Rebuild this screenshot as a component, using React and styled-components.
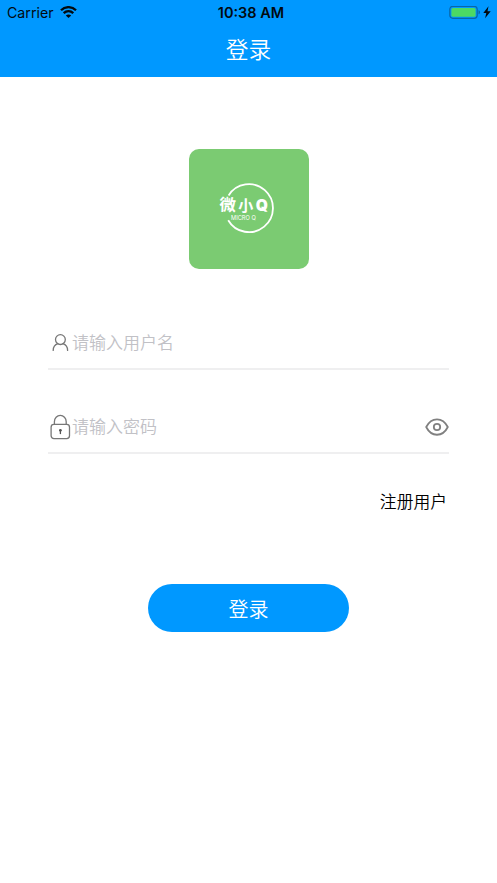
import React from "react";
import styled, { createGlobalStyle } from "styled-components";

const GlobalStyle = createGlobalStyle`
  * { box-sizing: border-box; }
  body { margin: 0; background: #fff; }
`;

const Screen = styled.main`
  width: 497px;
  height: 883px;
  display: flex;
  flex-direction: column;
  overflow: hidden;
  background: #fff;
  font-family: Inter, "Noto Sans CJK SC", sans-serif;
`;

const Header = styled.header`
  height: 77px;
  background: #0098ff;
`;

const StatusBar = styled.div`
  display: grid;
  grid-template-columns: 1fr auto 1fr;
  align-items: center;
  height: 25px;
  padding: 0 6px 0 7px;
  color: #020a10;
`;

const StatusGroup = styled.div`
  display: flex;
  align-items: center;
  justify-content: ${(p) => (p.$end ? "flex-end" : "flex-start")};
  gap: ${(p) => (p.$end ? "2px" : "6px")};
`;

const Carrier = styled.span`
  font-size: 14.2px;
  line-height: 25px;
`;

const Clock = styled.span`
  font-size: 14.5px;
  font-weight: 600;
  line-height: 25px;
  padding-left: 4px;
`;

const Title = styled.h1`
  margin: 0;
  padding-top: 8px;
  font-size: 22.7px;
  font-weight: 350;
  line-height: 34px;
  text-align: center;
  color: #fff;
`;

const Content = styled.form`
  display: flex;
  flex-direction: column;
  padding: 72px 48px 0;
`;

const LogoTile = styled.div`
  align-self: center;
  width: 120px;
  height: 120px;
  border-radius: 10px;
  overflow: hidden;
  background: #7bcb72;
  margin-bottom: 46px;
`;

const Field = styled.label`
  display: flex;
  align-items: center;
  height: ${(p) => (p.$tall ? "84px" : "55px")};
  padding-top: ${(p) => (p.$tall ? "32px" : "2px")};
  border-bottom: 2px solid #efeff0;
`;

const Input = styled.input`
  flex: 1;
  min-width: 0;
  height: 30px;
  padding: 0 0 ${(p) => (p.type === "password" ? "3px" : "2px")};
  border: 0;
  outline: 0;
  background: none;
  font: 350 17px "Noto Sans CJK SC", sans-serif;
  color: #111;
  &::placeholder { color: #c1c1c6; opacity: 1; }
`;

const Icon = styled.svg`
  display: block;
  flex: none;
`;

const RevealButton = styled.button`
  padding: 0;
  border: 0;
  background: none;
`;

const RegisterLink = styled.a`
  align-self: flex-end;
  margin-top: 35px;
  padding-right: 2px;
  font-size: 16.8px;
  font-weight: 350;
  line-height: 26px;
  color: #000;
`;

const LoginButton = styled.button`
  align-self: center;
  width: 201px;
  height: 48px;
  margin-top: 69px;
  padding: 0;
  border: 0;
  border-radius: 24px;
  background: #0098ff;
  color: #fff;
  font: 350 20px "Noto Sans CJK SC", sans-serif;
`;

const WifiIcon = () => (
  <Icon width="17" height="13" viewBox="0 0 17 13">
    <g fill="none" stroke="#020a10" strokeWidth="2.3">
      <path d="M1 4.2C5.2.1 11.8.1 16 4.2" />
      <path d="M3.7 7.2C6.5 4.6 10.5 4.6 13.3 7.2" />
    </g>
    <path d="M5.8 9.4c1.6-1.3 3.8-1.3 5.4 0L8.5 12.1z" fill="#020a10" />
  </Icon>
);

const BatteryIcon = () => (
  <Icon width="32" height="14" viewBox="0 0 32 14">
    <rect x=".8" y=".3" width="27.4" height="12" rx="3" fill="none" stroke="#0966a8" strokeWidth="1.2" />
    <rect x="2.4" y="1.9" width="24.2" height="8.8" rx="1.5" fill="#4cd964" />
    <path d="M29.5 4.3c2 .6 2 3.4 0 4z" fill="#0966a8" />
  </Icon>
);

const BoltIcon = () => (
  <Icon width="8" height="13" viewBox="0 0 8 13">
    <path d="M5.5.2.3 6.9h3L2.1 12.2 7.7 5.2H4.5z" fill="#020a10" />
  </Icon>
);

const Logo = () => (
  <Icon width="120" height="120" viewBox="0 0 120 120">
    <path d="M39.6 46.4A24 24 0 1 1 39.2 71.2" fill="none" stroke="#fff" strokeWidth="1.8" />
    <g fill="#fff" fontFamily="'Noto Sans CJK SC', sans-serif" fontWeight="700">
      <text x="30.5" y="61.8" fontSize="16.5" transform="rotate(2 39 56)">微</text>
      <text x="49.3" y="61.5" fontSize="15">小</text>
    </g>
    <text x="66.8" y="61.8" fontFamily="Inter, sans-serif" fontSize="15.5" fontWeight="900" fill="#fff">Q</text>
    <text x="42" y="70.6" fontFamily="Inter, sans-serif" fontSize="6" textLength="24.8" lengthAdjust="spacingAndGlyphs" fill="#fff">MICRO Q</text>
  </Icon>
);

const UserIcon = () => (
  <Icon width="24" height="28" viewBox="0 0 24 28" fill="none" stroke="#777" strokeWidth="1.3" strokeLinecap="round">
    <circle cx="12.4" cy="10.6" r="4.9" />
    <path d="M5.2 21.4c0-3.4 2-5.8 4.7-6.7M14.9 14.7c2.7.9 4.7 3.3 4.7 6.7" />
  </Icon>
);

const LockIcon = () => (
  <Icon width="24" height="28" viewBox="0 0 24 28" fill="none" stroke="#777" strokeWidth="1.3">
    <rect x="3.1" y="11.4" width="18.4" height="14.2" rx="2.8" />
    <path d="M6.4 11.4V8.7a5.9 6.3 0 0 1 11.8 0v2.7" />
    <circle cx="12.4" cy="17.3" r="1.4" fill="#555" stroke="none" />
    <path d="M12.4 17.5v3.6" stroke="#555" />
  </Icon>
);

const EyeIcon = () => (
  <Icon width="24" height="18" viewBox="0 0 24 18" fill="none" stroke="#808080" strokeWidth="1.8">
    <path d="M1.2 9C6.4-1.3 17.6-1.3 22.8 9 17.6 19.3 6.4 19.3 1.2 9z" strokeLinejoin="round" />
    <circle cx="12" cy="9" r="3.2" />
  </Icon>
);

export default function App() {
  return (
    <Screen>
      <GlobalStyle />
      <Header>
        <StatusBar>
          <StatusGroup>
            <Carrier>Carrier</Carrier>
            <WifiIcon />
          </StatusGroup>
          <Clock>10:38 AM</Clock>
          <StatusGroup $end>
            <BatteryIcon />
            <BoltIcon />
          </StatusGroup>
        </StatusBar>
        <Title>登录</Title>
      </Header>
      <Content onSubmit={(e) => e.preventDefault()}>
        <LogoTile>
          <Logo />
        </LogoTile>
        <Field>
          <UserIcon />
          <Input type="text" placeholder="请输入用户名" />
        </Field>
        <Field $tall>
          <LockIcon />
          <Input type="password" placeholder="请输入密码" />
          <RevealButton type="button" aria-label="显示密码">
            <EyeIcon />
          </RevealButton>
        </Field>
        <RegisterLink>注册用户</RegisterLink>
        <LoginButton type="submit">登录</LoginButton>
      </Content>
    </Screen>
  );
}
